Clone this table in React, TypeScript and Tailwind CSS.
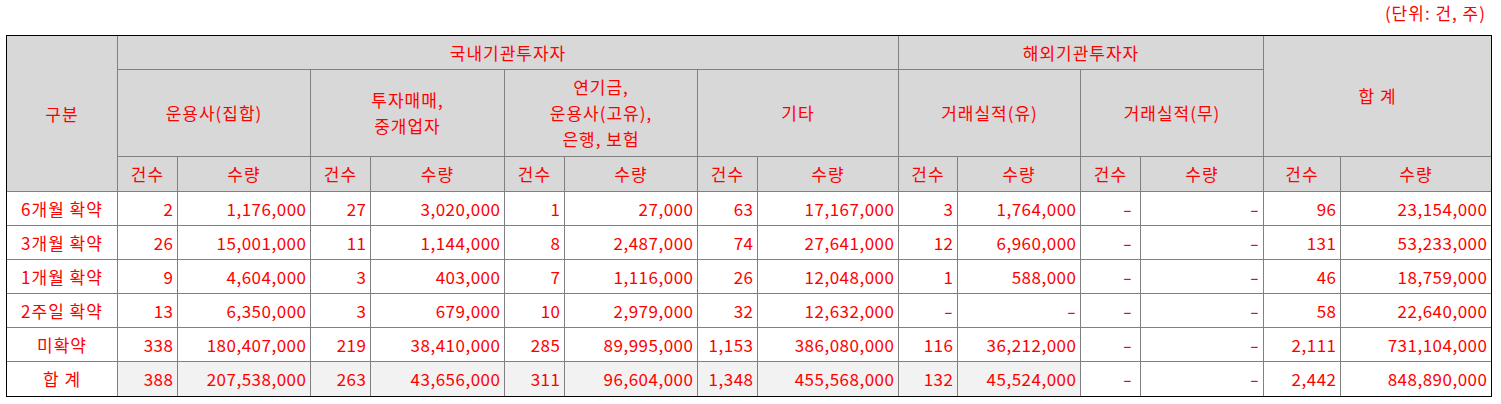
import React from "react";

const rows: string[][] = [
  ["6개월 확약", "2", "1,176,000", "27", "3,020,000", "1", "27,000", "63", "17,167,000", "3", "1,764,000", "-", "-", "96", "23,154,000"],
  ["3개월 확약", "26", "15,001,000", "11", "1,144,000", "8", "2,487,000", "74", "27,641,000", "12", "6,960,000", "-", "-", "131", "53,233,000"],
  ["1개월 확약", "9", "4,604,000", "3", "403,000", "7", "1,116,000", "26", "12,048,000", "1", "588,000", "-", "-", "46", "18,759,000"],
  ["2주일 확약", "13", "6,350,000", "3", "679,000", "10", "2,979,000", "32", "12,632,000", "-", "-", "-", "-", "58", "22,640,000"],
  ["미확약", "338", "180,407,000", "219", "38,410,000", "285", "89,995,000", "1,153", "386,080,000", "116", "36,212,000", "-", "-", "2,111", "731,104,000"],
  ["합 계", "388", "207,538,000", "263", "43,656,000", "311", "96,604,000", "1,348", "455,568,000", "132", "45,524,000", "-", "-", "2,442", "848,890,000"],
];

const H = "bg-[#d8d8d8] border-r border-b border-[#808080] flex items-center justify-center text-center tracking-[1px]";
const HLast = "bg-[#d8d8d8] border-b border-[#808080] flex items-center justify-center text-center tracking-[1px]";

export default function App() {
  return (
    <div className="w-[1501px] h-[404px] bg-white text-[#ff0000] text-[17px] leading-[26px] font-['Noto_Sans_CJK_KR','Noto_Sans',sans-serif]">
      <div className="ml-[6px] w-[1486px]">
        <div className="h-[35px] flex justify-end items-start pr-[6px]">
          <span className="tracking-[1px]">(단위: 건, 주)</span>
        </div>
        <div className="grid border border-black grid-cols-[111px_60px_133px_60px_134px_60px_133px_60px_141px_59px_123px_60px_123px_77px_150px] grid-rows-[34px_87px_35px_34px_34px_34px_34px_34px_34px]">
          <div className={`${H} row-span-3`}>구분</div>
          <div className={`${H} col-span-8`}>국내기관투자자</div>
          <div className={`${H} col-span-4`}>해외기관투자자</div>
          <div className={`${HLast} col-span-2 row-span-2`}>합 계</div>

          <div className={`${H} col-span-2`}>운용사(집합)</div>
          <div className={`${H} col-span-2`}>
            <span>
              투자매매,
              <br />
              중개업자
            </span>
          </div>
          <div className={`${H} col-span-2`}>
            <span>
              연기금,
              <br />
              운용사(고유),
              <br />
              은행, 보험
            </span>
          </div>
          <div className={`${H} col-span-2`}>기타</div>
          <div className={`${H} col-span-2`}>거래실적(유)</div>
          <div className={`${H} col-span-2`}>거래실적(무)</div>

          {Array.from({ length: 7 }).map((_, i) => (
            <React.Fragment key={i}>
              <div className={H}>건수</div>
              <div className={i === 6 ? HLast : H}>수량</div>
            </React.Fragment>
          ))}

          {rows.map((r, ri) => {
            const lastRow = ri === rows.length - 1;
            return r.map((v, ci) => {
              const lastCol = ci === r.length - 1;
              const grey = lastRow && ci >= 1 && ci <= 10;
              const isDash = v === "-";
              const cls = [
                "flex items-center",
                ci === 0 ? "justify-center tracking-[1px]" : "justify-end tracking-[0.5px]",
                ci === 0 ? "" : ci === 11 ? "pr-[8.5px]" : isDash ? "pr-[4px]" : "pr-[3.5px]",
                lastCol ? "" : "border-r",
                lastRow ? "" : "border-b",
                "border-[#808080]",
                grey ? "bg-[#f2f2f2]" : "bg-white",
              ].join(" ");
              return (
                <div key={`${ri}-${ci}`} className={cls}>
                  {isDash ? (
                    <span className="inline-block tracking-normal origin-right scale-x-[1.5]">-</span>
                  ) : (
                    v
                  )}
                </div>
              );
            });
          })}
        </div>
      </div>
    </div>
  );
}
